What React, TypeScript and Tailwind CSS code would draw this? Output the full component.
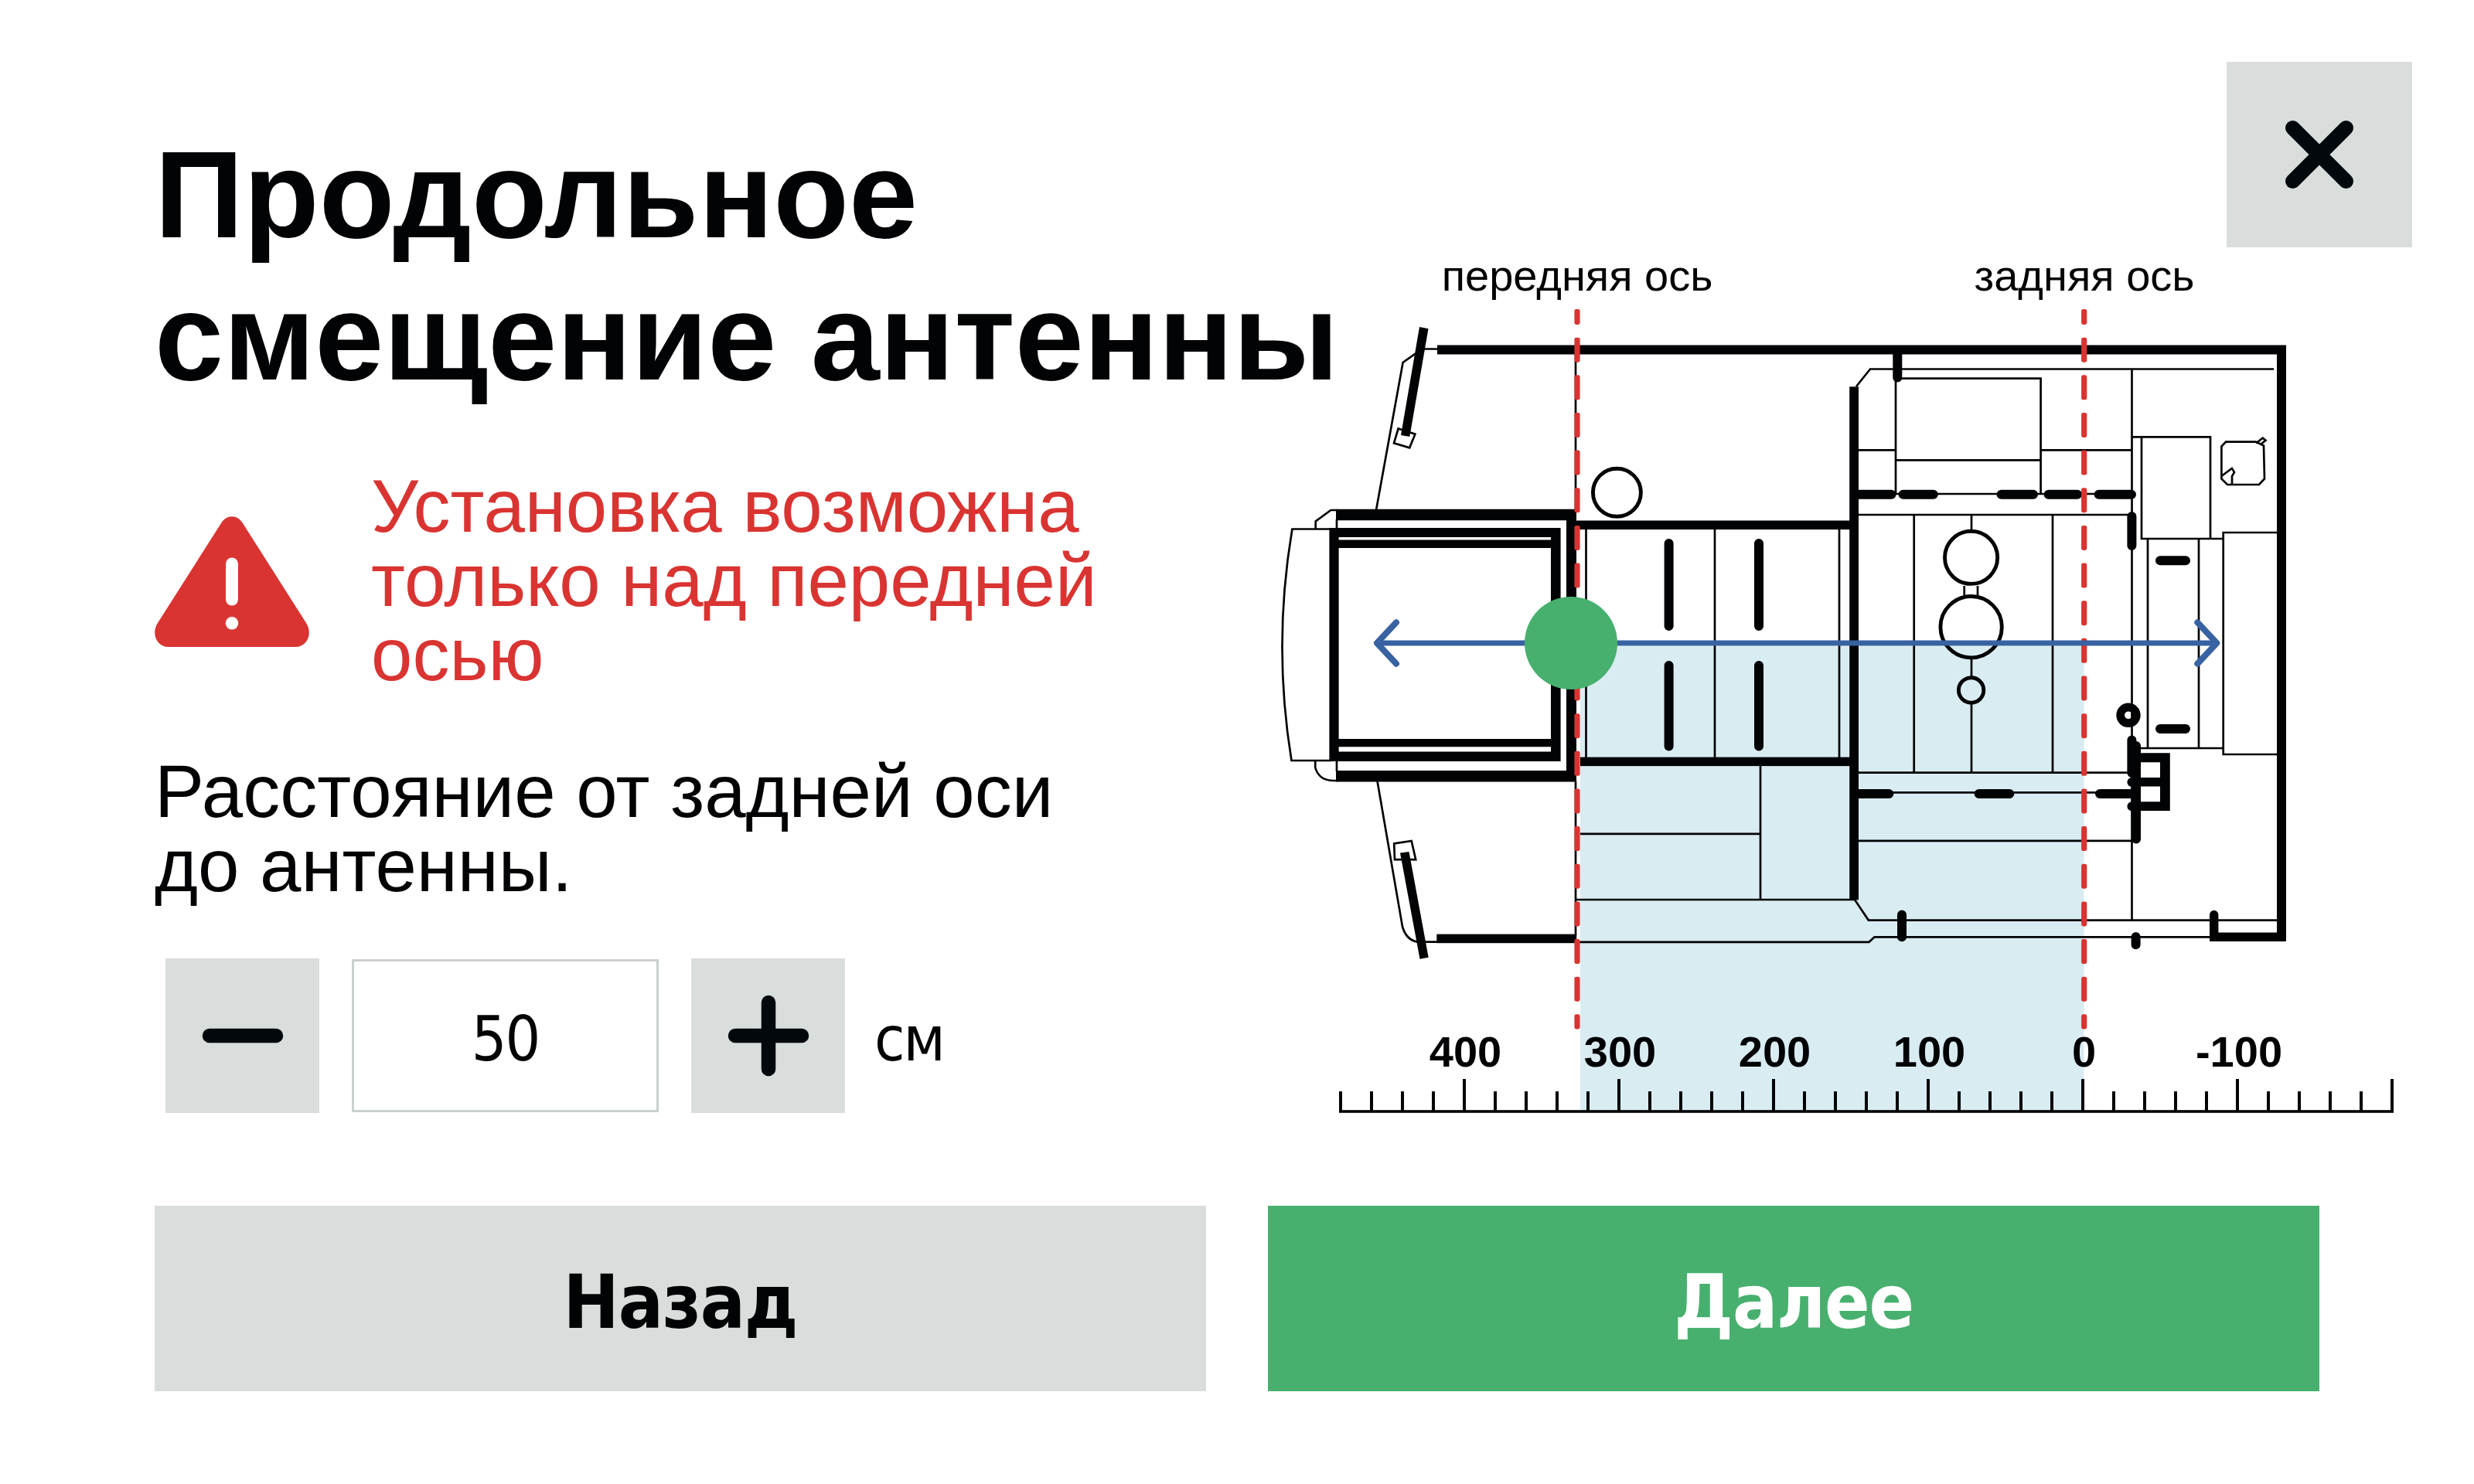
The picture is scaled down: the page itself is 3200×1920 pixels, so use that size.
import React from "react";

const INK = "#020305";
const RED = "#d93431";
const GREEN = "#48b06e";
const BLUE = "#3862a1";
const ZONE = "#d9ecf2";

const DASH_START = 388;
const DASH_STEP = 48.65;
const DASH_LENGTH = 32;

/** Dashed vertical line that marks a tractor axle. */
function AxisLine({ x }: { x: number }) {
  const dashes = Array.from({ length: 20 }, (_, i) => {
    const top = Math.max(400, DASH_START + i * DASH_STEP);
    const bottom = Math.min(1331.5, DASH_START + i * DASH_STEP + DASH_LENGTH);
    return { top, height: bottom - top };
  });
  return (
    <g fill={RED}>
      {dashes.map((d, i) => (
        <rect key={i} x={x - 3.6} y={d.top} width={7.2} height={d.height} rx={2.4} />
      ))}
    </g>
  );
}

/** Ruler under the drawing, distances in centimetres from the rear axle. */
function Ruler() {
  const labels = [
    { x: 1895.5, text: "400" },
    { x: 2095.5, text: "300" },
    { x: 2295.5, text: "200" },
    { x: 2495.5, text: "100" },
    { x: 2695.5, text: "0" },
    { x: 2896, text: "-100" },
  ];
  return (
    <g fill={INK}>
      <rect x={1732} y={1436.2} width={1364} height={3.6} />
      {Array.from({ length: 35 }, (_, i) => {
        const top = i % 5 === 4 ? 1396 : 1412;
        return <rect key={i} x={1732 + i * 40} y={top} width={4} height={1438 - top} />;
      })}
      {labels.map((l) => (
        <text
          key={l.text}
          x={l.x}
          y={1380}
          textAnchor="middle"
          className="font-['Liberation_Sans',Arial,sans-serif] text-[56px] font-bold"
        >
          {l.text}
        </text>
      ))}
    </g>
  );
}

function TractorBody() {
  return (
    <g>
      {/* thin contours */}
      <g fill="none" stroke={INK} strokeWidth={2.7}>
        <path d="M1859 451.5H1840M1831 457.3L1814.6 469L1780 660" />
        <path d="M1808.6 554.5L1830.4 561.7L1823.2 579.3L1803 573.3Z" />
        <path d="M2038 458V660M2038 1011V1210" />
        <path d="M1729 660H1721.4L1701.7 674.5V684M1729 672V684" />
        <path d="M1722 684.5H1671.4Q1646 834 1670.5 984H1722" />
        <path d="M1701.2 985V993Q1706 1010 1725 1010H1730M1729 984V998" />
        <path d="M1781.4 1010L1814 1199Q1819 1216 1833 1218.6H1860" />
        <path d="M1803.2 1091.4L1825.7 1088L1831.2 1112.2H1804Z" />
        <path d="M2051.5 685V980M2218 685V980M2379 685V980" />
        <path d="M2044 1078.8H2277M2277 990V1164M2038 1164H2399L2416.8 1190.6H2946" />
        <path d="M2039 1218.8H2417.5L2424.5 1212.3H2860" />
        <path d="M2401 500L2419 477.5H2941" />
        <path d="M2452 490V639M2454 489.7H2639.6V639M2452 595.3H2639.6" />
        <path d="M2404 582.3H2452M2639.6 582.3H2757.5" />
        <path d="M2404 639H2757M2404 666H2753" />
        <path d="M2475.7 666V999.6M2655 666V999.6M2550 666V686M2550 853V876M2550 910V999.6" />
        <path d="M2540.7 758V771M2558 758V771" />
        <path d="M2404 999.6H2755M2404 1025.3H2757M2404 1087.8H2760" />
        <path d="M2757.5 477.5V1190.6" />
        <path d="M2757 565.3H2859V697M2770 565V697H2875.7M2778 697V968M2844 697V968M2767 968H2875.7" />
        <path d="M2946 689H2875.7V976H2946" />
        <path d="M2879 571.7H2918L2928 576.5L2929 619.5L2922 627H2881L2873.4 619.5V577.5Z" />
        <path d="M2918 573.5L2926.7 566.7L2930.5 569.8L2924 575M2873.4 616L2886.8 605.9L2890 611L2887 616V627" />
      </g>

      {/* round parts */}
      <g fill="none" stroke={INK} strokeWidth={4.9}>
        <circle cx={2091.4} cy={637.3} r={31} />
        <circle cx={2549.6} cy={721.3} r={34.1} />
        <circle cx={2549.6} cy={811.2} r={39.7} />
        <circle cx={2549.6} cy={893} r={16.2} />
        <circle cx={2753} cy={925.3} r={10.3} strokeWidth={10.8} />
      </g>

      {/* heavy walls */}
      <g fill={INK}>
        <path d="M1859 446.4H2957V1218H2858V1183.5A5.7 5.7 0 0 1 2869.4 1183.5V1206.5H2945V458.4H1859Z" />
        <path d="M1836 423L1847.5 425.3L1823.3 565L1812 563Z" />
        <path d="M1811 1103.5L1822.5 1102L1847.7 1238.8L1836.5 1240.8Z" />
        <path d="M1728 658.8H2039V1011.4H1728V997H2026V673.2H1728Z" />
        <path
          fillRule="evenodd"
          d="M1719.4 683H2018.6V985H1719.4ZM1731.6 695H2006V698.4H1731.6ZM1731.6 709H2006V956H1731.6ZM1731.6 966.2H2006V972.6H1731.6Z"
        />
        <rect x={2039} y={673.5} width={354} height={11.6} />
        <rect x={2044} y={979.6} width={349} height={11.5} />
        <rect x={2392.2} y={500.3} width={11.8} height={664} />
        <rect x={1858.3} y={1208.6} width={180.9} height={11.6} />
        <path
          fillRule="evenodd"
          d="M2764 974.3H2806.8V1049H2764ZM2769 986.2H2794V1006H2769ZM2769 1017.5H2794V1037.2H2769Z"
        />
      </g>

      {/* rounded heavy strokes */}
      <g fill="none" stroke={INK} strokeWidth={12} strokeLinecap="round">
        <path d="M2158.6 703V810M2158.6 861V965.5M2275 703V810M2275 861V965.5" />
        <path d="M2454.3 458V488.5M2460 1183.5V1212.3" />
        <path d="M2404 639.7H2446.5M2461.5 639.7H2500.8M2588.5 639.7H2630M2649.6 639.7H2687M2714.6 639.7H2757" />
        <path d="M2404 1027H2443.3M2559.6 1027H2599.3M2716 1027H2757" />
        <path d="M2757.4 668V706M2757.4 957.4V1000M2763 965V1085.5M2757.4 1012H2763M2757.4 1043.2H2763" />
        <path d="M2794 725.2H2827M2794 943H2827M2762.6 1212V1222.2" />
      </g>
    </g>
  );
}

function Diagram() {
  return (
    <svg viewBox="1640 320 1560 1140" className="block h-[1140px] w-[1560px] shrink-0">
      <rect x={2044} y={836} width={651.5} height={601} fill={ZONE} />
      <TractorBody />
      <AxisLine x={2040} />
      <AxisLine x={2695.7} />
      <g fill="none" stroke={BLUE} strokeLinecap="round" strokeLinejoin="round">
        <path d="M1782 832H2867" strokeWidth={7.2} />
        <path d="M1806 805.3L1781 832L1806 858.7M2842.3 805.3L2867.3 832L2842.3 858.7" strokeWidth={8} />
      </g>
      <circle cx={2032} cy={832} r={60} fill={GREEN} />
      <g fill={INK} className="font-['Liberation_Sans',Arial,sans-serif] text-[56px]">
        <text x={2040} y={376} textAnchor="middle">передняя ось</text>
        <text x={2696} y={376} textAnchor="middle">задняя ось</text>
      </g>
      <Ruler />
    </svg>
  );
}

function WarningIcon() {
  return (
    <svg viewBox="0 0 200 169" className="mt-0.5 h-[169px] w-[200px] shrink-0">
      <path
        fill={RED}
        d="M86 9C92.500 -2.800 107.500 -2.800 114 9L196 138C205 152 197 169 182 169H18C3 169 -5 152 4 138Z"
      />
      <path d="M100 61.500V107.500" stroke="#fff" strokeWidth={16} strokeLinecap="round" />
      <circle cx={100} cy={138.300} r={8.300} fill="#fff" />
    </svg>
  );
}

function StepButton({ kind }: { kind: "minus" | "plus" }) {
  return (
    <button className="flex h-[200px] w-[199px] items-center justify-center bg-[#d9dddb]">
      <svg viewBox="0 0 120 120" className="size-[120px]" stroke="#03080d" strokeWidth={18.5} strokeLinecap="round">
        <path d="M17 60H103" />
        {kind === "plus" && <path d="M60 17V103" />}
      </svg>
    </button>
  );
}

export default function App() {
  return (
    <main className="flex h-[1920px] w-[3200px] flex-col overflow-hidden bg-white pt-20 pl-[200px] font-['Liberation_Sans',Arial,sans-serif] text-[#020305]">
      <div className="flex h-[1480px] gap-20">
        <section className="flex w-[1360px] shrink-0 flex-col pt-20">
          <h1 className="text-[160px] leading-[184px] font-bold whitespace-nowrap">
            Продольное
            <br />
            смещение антенны
          </h1>

          <div className="mt-[79px] flex items-center gap-20">
            <WarningIcon />
            <p className="text-[96px] leading-[96px] whitespace-nowrap text-[#d93431]">
              Установка возможна
              <br />
              только над передней
              <br />
              осью
            </p>
          </div>

          <p className="mt-[81px] text-[96px] leading-[96px] whitespace-nowrap">
            Расстояние от задней оси
            <br />
            до антенны.
          </p>

          <div className="mt-[72px] ml-[14px] flex h-[200px] items-center gap-[42px] font-['DejaVu_Sans_Condensed','DejaVu_Sans',sans-serif] text-[80px] tracking-[-2px]">
            <StepButton kind="minus" />
            <div className="flex h-[198px] w-[397px] items-center justify-center border-[3px] border-[#c9d0ce] pt-[9px]">
              50
            </div>
            <StepButton kind="plus" />
            <span className="-ml-1 pt-[9px]">см</span>
          </div>
        </section>

        <section className="flex w-[1480px] shrink-0 flex-col">
          <button className="flex size-60 shrink-0 items-center justify-center self-end bg-[#d9dddb]">
            <svg viewBox="0 0 100 100" className="size-[100px]" stroke="#03080d" strokeWidth={19} strokeLinecap="round">
              <path d="M15.500 15.500L84.500 84.500M84.500 15.500L15.500 84.500" />
            </svg>
          </button>
          <Diagram />
        </section>
      </div>

      <div className="flex h-60 gap-20 font-['DejaVu_Sans_Condensed','DejaVu_Sans',sans-serif] text-[96px] font-bold tracking-[-1.2px]">
        <button className="w-[1360px] bg-[#d9dddb] pt-[9px]">Назад</button>
        <button className="w-[1360px] bg-[#48b06e] pt-[9px] text-white">Далее</button>
      </div>
    </main>
  );
}
